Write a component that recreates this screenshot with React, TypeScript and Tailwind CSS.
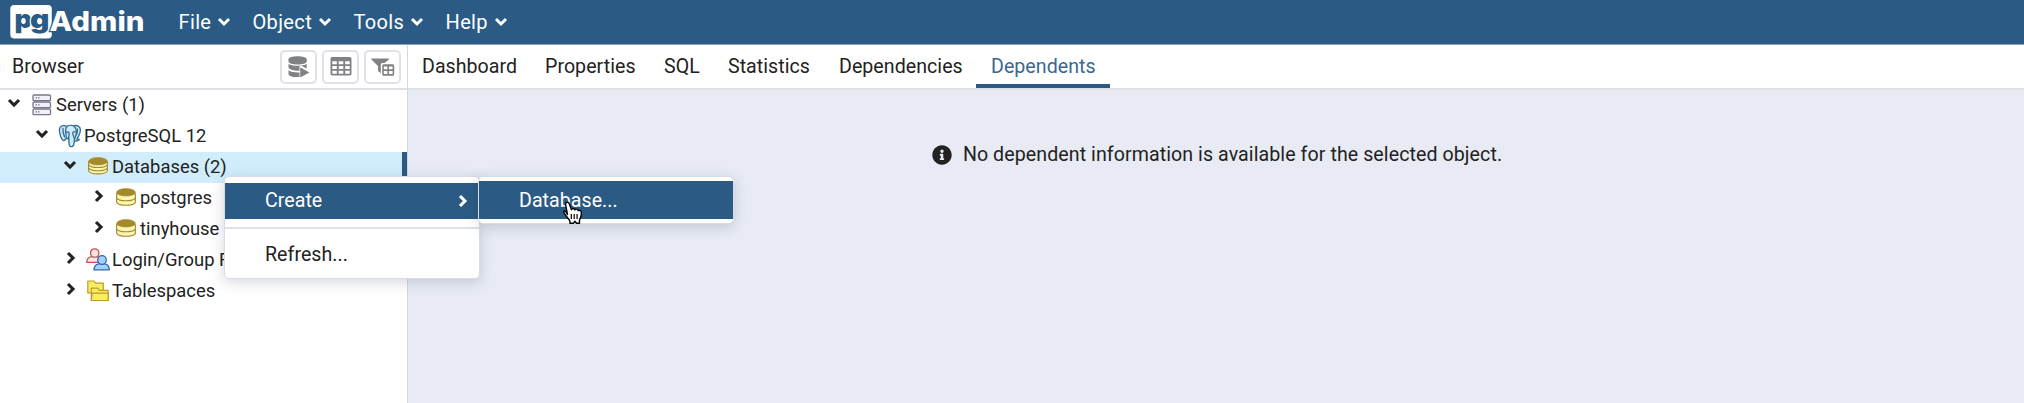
import type { ReactNode } from "react";
import { FaInfoCircle } from "react-icons/fa";

function Chevron({ dir, size = "menu" }: { dir: "down" | "right"; size?: "menu" | "tree" }) {
  return dir === "down" ? (
    <svg className="block shrink-0" width="14" height="10" viewBox="0 0 14 10" fill="none" stroke="currentColor" strokeWidth={size === "tree" ? 3.1 : 2.9}>
      <path d="M2 2l5 5 5-5" />
    </svg>
  ) : (
    <svg className="block shrink-0" width="10" height="14" viewBox="0 0 10 14" fill="none" stroke="currentColor" strokeWidth="3.1">
      <path d="M2 2l5 5-5 5" />
    </svg>
  );
}

function Logo() {
  return (
    <svg className="block" width="136" height="34" viewBox="0 0 136 34" fontFamily="Inter, 'Open Sans', sans-serif" fontWeight="900">
      <rect x="0.3" y="0" width="41.5" height="33.5" rx="4" fill="#fff" />
      <text x="4.5" y="23" fontSize="26" textLength="17.5" lengthAdjust="spacingAndGlyphs" fill="#2b5b84">p</text>
      <text x="20" y="23" fontSize="26" textLength="19.5" lengthAdjust="spacingAndGlyphs" fill="#2b5b84" stroke="#fff" strokeWidth="2" paintOrder="stroke">g</text>
      <text x="39.5" y="26" fontSize="27" textLength="95" lengthAdjust="spacingAndGlyphs" fill="#fff" stroke="#2b5b84" strokeWidth="2.4" paintOrder="stroke" fontWeight="800">Admin</text>
    </svg>
  );
}

function ServersIcon() {
  return (
    <svg width="20" height="22" viewBox="0 0 20 22" fill="#f1f1f6" stroke="#77758f" strokeWidth="1.3">
      {[1, 8, 15].map((y) => (
        <g key={y}>
          <rect x="1" y={y} width="17.5" height="5.6" rx="1.2" />
          <path d={`M3.5 ${y + 2.8}h1.5M6 ${y + 2.8}h1.5`} />
        </g>
      ))}
    </svg>
  );
}

function ElephantIcon() {
  return (
    <svg width="24" height="24" viewBox="0 0 24 24" fill="#cdebf9" stroke="#336d96" strokeWidth="1.35" strokeLinejoin="round" strokeLinecap="round">
      <path d="M8 2C4 .8 1.4 2.5 1.4 6c0 4 2.1 10 4.2 10.6 1.5.2 2-2 3-2.4" />
      <path d="M15 2c4-1.4 7.5.4 7.4 4-.1 3-2.1 7-3.5 9.2l2.4.3c-.9 1.4-2.6 1.7-4.2 1.4" />
      <path d="M9.2 2.2c3-1.6 6.4-1 8 1.5 1.2 2 1.4 6 .3 8.8l-1 2.5c-.4 2.5.1 6.4-2.1 7.4-1.7.7-3.1-.2-3.3-2.1l-.3-5.5c-2.3-.2-3-1.5-2.7-3.4L7.6 6.7c0-1.9.3-3.5 1.6-4.5z" />
      <path d="M8 8.5c1.8-1.2 3.4-.3 3.1 1.7-.2 2-.6 3-.3 4.6M17.5 8c-1.8-.8-2.9-.2-2.7 1.6.2 1.8 1.2 3.3 1.7 5.3M5 4.5c-.4 3 .5 6 1.6 8.5M19.4 5c.2 2-.3 4-1 5.7" fill="none" />
    </svg>
  );
}

function DatabaseIcon({ count }: { count: 2 | 3 }) {
  const layers = count === 3 ? [11.2, 8, 4.8] : [10.2, 5.7];
  const depth = count === 3 ? 2.7 : 4;
  return (
    <svg width="20" height="19" viewBox="0 0 20 19">
      {layers.map((y) => (
        <path key={y} d={`M.6 ${y}v${depth}c1.6 4 17.2 4 18.8 0v-${depth}z`} fill="#fbf6b4" stroke="#a58a2c" strokeWidth="1.1" />
      ))}
      <ellipse cx="10" cy="4.3" rx="9.4" ry="3.7" fill="#a58a2c" stroke="#a58a2c" strokeWidth=".6" />
    </svg>
  );
}

function RolesIcon() {
  return (
    <svg width="24" height="23" viewBox="0 0 24 23" strokeWidth="1.3" strokeLinejoin="round">
      <path d="M.8 14.4c0-4 2.2-5.3 4.7-5.7h6c2.5.4 4 2 4.3 5.7z" fill="#fbe3e2" stroke="#c5514f" />
      <circle cx="8.7" cy="5" r="4.2" fill="#fbe3e2" stroke="#c5514f" />
      <path d="M8 21.8c.1-4 2-5.5 4.7-6h6c2.6.4 4.5 2 4.6 6z" fill="#a6d0f7" stroke="#2e68b0" />
      <circle cx="16" cy="12" r="4.3" fill="#a6d0f7" stroke="#2e68b0" />
    </svg>
  );
}

function TablespacesIcon() {
  return (
    <svg width="22" height="22" viewBox="0 0 22 22" fill="#f7ee65" stroke="#bf9b22" strokeWidth="1.2" strokeLinejoin="round">
      <path d="M.8 12.8V1h6.1l1.6 2.1h7.8v9.7z" />
      <path d="M4.3 20.5V8.2h6.4l1.7 2.2h8.8v10.1z" />
      <path d="M4.3 20.5l1-7.4h15.9v7.4z" />
    </svg>
  );
}

function QueryToolIcon() {
  return (
    <svg width="22" height="22" viewBox="0 0 22 22" fill="#808184">
      <path d="M.5 3.3C.5 1.3 4.6.2 9.6.2s9.1 1.1 9.1 3.1v2.1c0 1.9-4.1 3-9.1 3s-9.1-1.1-9.1-3z" />
      <path d="M.5 8c3.5 2.4 14.7 2.4 18.2 0v4.6l-7.2-3.6v5.7c-4.5.2-9.6-.5-11-2.9z" />
      <path d="M.5 14.3c2 1.7 6.8 2.3 11 2.1v4.6c-5.5.5-11-.6-11-3z" />
      <path d="M12.2 11.2v10.4l9.2-5.2z" />
    </svg>
  );
}

function TableIcon() {
  return (
    <svg width="22" height="19" viewBox="0 0 22 19">
      <path fillRule="evenodd" fill="#808184" d="M2.2 0h17.6q1.7 0 1.7 1.7v15.1q0 1.7-1.7 1.7H2.2q-1.7 0-1.7-1.7V1.7Q.5 0 2.2 0zM2.3 4.3v3h4.5v-3zM8.7 4.3v3h4.6v-3zM15.2 4.3v3h4.5v-3zM2.3 9v3h4.5V9zM8.7 9v3h4.6V9zM15.2 9v3h4.5V9zM2.3 13.7v3h4.5v-3zM8.7 13.7v3h4.6v-3zM15.2 13.7v3h4.5v-3z" />
    </svg>
  );
}

function FilterIcon() {
  return (
    <svg width="24" height="20" viewBox="0 0 24 20" fill="#808184">
      <path d="M.7 1.5h16.8q1 .2.4 1.1L13.5 6h-2.4q-1.300.3-1.300 1.600v8.700L7 13.900V9L.4 2.600Q0 1.700.7 1.500z" />
      <path fillRule="evenodd" d="M12.7 7.2h9q1.5 0 1.5 1.5v8.5q0 1.5-1.5 1.5h-9q-1.5 0-1.5-1.5V8.7q0-1.5 1.5-1.5zM12.8 9.6v2.6h3.6V9.6zM18 9.6v2.6h3.6V9.6zM12.8 13.900v3h3.600v-3zM18 13.900v3h3.600v-3z" />
    </svg>
  );
}

function HandCursor() {
  return (
    <svg className="absolute left-[561px] top-[200px]" width="24" height="26" viewBox="0 0 24 26">
      <path
        d="M6.500 14.500L4.600 4.600C4.200 2.300 7.300 1.400 8.200 3.500l2.300 6.200c.3-1.600 2.900-1.600 3.300.2.700-1.300 3-1 3.300.7 1.500-.9 3.300.1 3.300 2 .1 3-.8 5.600-1.900 7.300v3.300h-3l-1.600-2-1.300 2H8.900v-2.200c-1.200-2.300-3.700-4.400-5.800-8.100-1.400-2.200 1.400-3.500 3.400 1.600z"
        fill="#fff" stroke="#000" strokeWidth="1.4" strokeLinejoin="round"
      />
      <path d="M10.3 14v5M13.2 14v5M16.1 14v5" stroke="#000" strokeWidth="1.2" />
    </svg>
  );
}

function ToolButton({ children }: { children: ReactNode }) {
  return <button className="flex h-[34px] w-[37px] items-center justify-center rounded-[5px] border-2 border-[#dfe2e8] bg-white">{children}</button>;
}

interface Row {
  label: string;
  icon: ReactNode;
  open?: boolean;
  selected?: boolean;
  indent: string;
}

const rows: Row[] = [
  { label: "Servers (1)", icon: <ServersIcon />, open: true, indent: "pl-[7px]" },
  { label: "PostgreSQL 12", icon: <ElephantIcon />, open: true, indent: "pl-[35px]" },
  { label: "Databases (2)", icon: <DatabaseIcon count={3} />, open: true, selected: true, indent: "pl-[63px]" },
  { label: "postgres", icon: <DatabaseIcon count={2} />, indent: "pl-[91px]" },
  { label: "tinyhouse", icon: <DatabaseIcon count={2} />, indent: "pl-[91px]" },
  { label: "Login/Group Roles", icon: <RolesIcon />, indent: "pl-[63px]" },
  { label: "Tablespaces", icon: <TablespacesIcon />, indent: "pl-[63px]" },
];

function TreeRow({ row }: { row: Row }) {
  return (
    <div className={`flex h-[31px] items-center pb-[2px] ${row.indent} ${row.selected ? "border-r-[5px] border-[#2b5b84] bg-[#d1edfb]" : ""}`}>
      <span className="flex w-[22px] shrink-0 pb-[3px]">
        {row.open ? <Chevron dir="down" size="tree" /> : <span className="pl-[3px]"><Chevron dir="right" size="tree" /></span>}
      </span>
      <span className="flex w-[27px] shrink-0 items-center justify-center pr-[2px]">{row.icon}</span>
      <span className="whitespace-nowrap">{row.label}</span>
    </div>
  );
}

const tabs = [
  { label: "Dashboard", width: "w-[123px]" },
  { label: "Properties", width: "w-[119px]" },
  { label: "SQL", width: "w-[64px]" },
  { label: "Statistics", width: "w-[111px]" },
  { label: "Dependencies", width: "w-[151px]" },
  { label: "Dependents", width: "w-[134px]" },
];

const menus = [
  { label: "File", width: "w-[74px]" },
  { label: "Object", width: "w-[101px]" },
  { label: "Tools", width: "w-[92px]" },
  { label: "Help", width: "w-[80px]" },
];

export default function App() {
  return (
    <div className="relative flex h-[403px] w-[2024px] flex-col overflow-hidden bg-white font-['Roboto',sans-serif] text-[19.6px] leading-[31px] tracking-[0.002em] text-[#222]">
      <header className="flex h-[45px] shrink-0 items-start border-b border-[#8ba5bb] bg-[#2b5b84] pl-[10px] pt-[5px] text-white">
        <Logo />
        <nav className="flex pl-[32.5px] text-[20px] tracking-[0.018em]">
          {menus.map((m) => (
            <div key={m.label} className={`flex h-[34px] shrink-0 items-center gap-[6px] ${m.width}`}>
              <span>{m.label}</span>
              <Chevron dir="down" />
            </div>
          ))}
        </nav>
      </header>

      <div className="flex min-h-0 flex-1">
        <aside className="flex w-[408px] shrink-0 flex-col border-r border-[#d3d7df] bg-white">
          <div className="flex h-[45px] shrink-0 items-center border-b-2 border-[#dfe1e6] pl-[12px] pr-[6px]">
            <span className="flex-1">Browser</span>
            <div className="flex gap-[5px]">
              <ToolButton><QueryToolIcon /></ToolButton>
              <ToolButton><TableIcon /></ToolButton>
              <ToolButton><FilterIcon /></ToolButton>
            </div>
          </div>
          <div className="flex flex-col text-[18.4px] tracking-normal">
            {rows.map((r) => <TreeRow key={r.label} row={r} />)}
          </div>
        </aside>

        <main className="flex flex-1 flex-col bg-[#e8ebf3]">
          <div className="flex h-[45px] shrink-0 border-b-2 border-[#dcdfe4] bg-white">
            {tabs.map((t) => (
              <div
                key={t.label}
                className={`flex h-[43px] shrink-0 items-center ${t.width} ${t.label === "Dependents" ? "border-b-4 border-[#2b5b84] pl-[15px] pt-[4px] text-[#396890]" : "pl-[14px]"}`}
              >
                {t.label}
              </div>
            ))}
          </div>
          <div className="flex items-center justify-center gap-[11px] pl-[2px] pt-[49px] tracking-[0.004em]">
            <FaInfoCircle size={20} className="text-[#222]" />
            <span>No dependent information is available for the selected object.</span>
          </div>
        </main>
      </div>

      <div className="absolute left-[224px] top-[176px] h-[103px] w-[256px] rounded-[5px] border border-[#d9dce3] bg-white pt-[6px] shadow-[0_3px_14px_rgba(40,50,80,0.2)]">
        <div className="flex h-[36px] items-center justify-between bg-[#2b5b84] pb-[1px] pl-[40px] pr-[11px] text-white">
          <span>Create</span>
          <Chevron dir="right" />
        </div>
        <div className="mt-[8px] h-[2px] bg-[#dee1e7]" />
        <div className="flex h-[51px] items-center pl-[40px]">Refresh...</div>
      </div>

      <div className="absolute left-[478px] top-[176px] h-[48px] w-[256px] rounded-[5px] border border-[#d9dce3] bg-white pt-[4px] shadow-[0_3px_14px_rgba(40,50,80,0.2)]">
        <div className="flex h-[38px] items-center bg-[#2b5b84] pl-[40px] text-white">Database...</div>
      </div>
      <HandCursor />
    </div>
  );
}
